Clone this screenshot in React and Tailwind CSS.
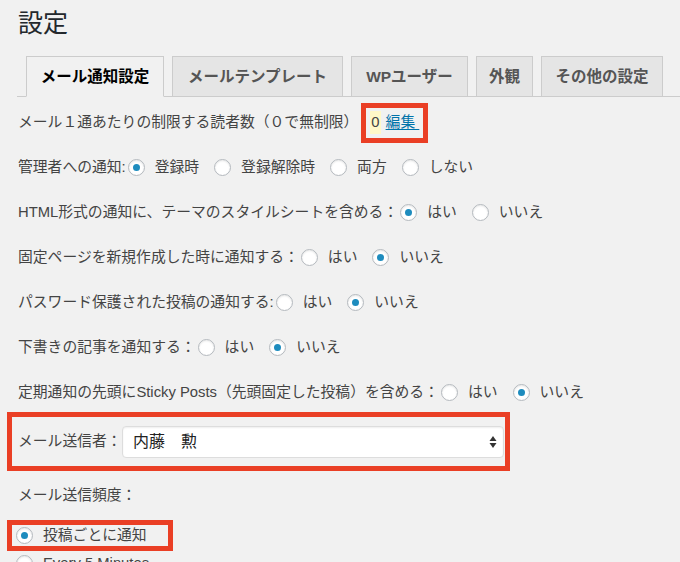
import React from "react";

const font = { fontFamily: '"Liberation Sans", "Noto Sans CJK JP", sans-serif' };

function Radio({ checked, label, last }) {
  return (
    <span className={"inline-flex items-center " + (last ? "" : "mr-[15px]")}>
      <span className="w-[17px] h-[17px] rounded-full border border-[#b4b9be] bg-white shadow-[inset_0_1px_2px_rgba(0,0,0,0.1)] flex items-center justify-center">
        {checked && <span className="w-[7px] h-[7px] rounded-full bg-[#1e8cbe]" />}
      </span>
      <span className="ml-[10px]">{label}</span>
    </span>
  );
}

function Row({ label, options }) {
  return (
    <div className="h-[45px] flex items-center">
      <span className="mr-[2px]">{label}</span>
      {options.map((o, i) => (
        <Radio key={i} checked={o.checked} label={o.label} last={i === options.length - 1} />
      ))}
    </div>
  );
}

const tabs = [
  { name: "メール通知設定", w: "w-[138px]", active: true },
  { name: "メールテンプレート", w: "w-[171px]" },
  { name: "WPユーザー", w: "w-[117px]" },
  { name: "外観", w: "w-[57px]" },
  { name: "その他の設定", w: "w-[122px]" },
];

const yesNo = (yes) => [
  { label: "はい", checked: yes },
  { label: "いいえ", checked: !yes },
];

export default function App() {
  return (
    <div className="w-[680px] h-[562px] overflow-hidden bg-[#f1f1f1] text-[#444]" style={font}>
      <h1 className="pl-[18px] pt-[5px] h-[57px] text-[25px] leading-[36px] text-[#23282d]">設定</h1>

      {/* tabs */}
      <div className="ml-[17px] h-[40px] flex items-end gap-[8px] pl-[9px] border-b border-[#ccc]">
        {tabs.map((t) => (
          <div
            key={t.name}
            className={
              t.w +
              " h-[40px] flex items-center justify-center border border-[#ccc] text-[15.5px] font-bold " +
              (t.active
                ? "bg-[#f1f1f1] text-black border-b-[#f1f1f1] -mb-px h-[41px]"
                : "bg-[#e5e5e5] text-[#555] border-b-0")
            }
          >
            {t.name}
          </div>
        ))}
      </div>

      <div className="pl-[18px] pt-[3px] text-[14.8px]">
        <div className="h-[45px] flex items-center">
          <span>メール１通あたりの制限する読者数（０で無制限）</span>
          <span className="ml-[3px] h-[40px] border-[5px] border-[#ea3f25] flex items-center pl-[4px] pr-[4px]">
            <span className="bg-[#fff8c8] px-[1px]">0</span>
            <span className="ml-[5px] text-[#0073aa] underline underline-offset-2">編集&nbsp;</span>
          </span>
        </div>

        <Row
          label="管理者への通知:"
          options={[
            { label: "登録時", checked: true },
            { label: "登録解除時" },
            { label: "両方" },
            { label: "しない" },
          ]}
        />
        <Row label="HTML形式の通知に、テーマのスタイルシートを含める：" options={yesNo(true)} />
        <Row label="固定ページを新規作成した時に通知する：" options={yesNo(false)} />
        <Row label="パスワード保護された投稿の通知する:" options={yesNo(false)} />
        <Row label="下書きの記事を通知する：" options={yesNo(false)} />
        <Row label="定期通知の先頭にSticky Posts（先頭固定した投稿）を含める：" options={yesNo(false)} />
      </div>

      <div className="ml-[7px] -mt-[3px] w-[503px] h-[59px] border-[5px] border-[#ea3f25] flex items-center pl-[6px] pr-[1px] text-[14.8px]">
        <span className="w-[104px]">メール送信者：</span>
        <div className="flex-1 h-[32px] bg-white border border-[#ddd] rounded-[4px] shadow-[inset_0_1px_2px_rgba(0,0,0,0.07)] flex items-center justify-between pl-[10px] pr-[6px]">
          <span className="text-[16px] text-[#222]">内藤　勲</span>
          <svg width="8" height="14" viewBox="0 0 8 14">
            <path d="M4 1 L7.5 6 L0.5 6 Z" fill="#333" />
            <path d="M4 13 L7.5 8 L0.5 8 Z" fill="#333" />
          </svg>
        </div>
      </div>

      <div className="pl-[18px] h-[49px] flex items-center text-[14.8px]">メール送信頻度：</div>

      <div className="ml-[7px] w-[166px] h-[31px] border-[5px] border-[#ea3f25] flex items-center pl-[4px] text-[14.8px]">
        <Radio checked label="投稿ごとに通知" last />
      </div>
      <div className="pl-[16px] pt-[1px] text-[14.8px]">
        <Radio label="Every 5 Minutes" last />
      </div>
    </div>
  );
}
